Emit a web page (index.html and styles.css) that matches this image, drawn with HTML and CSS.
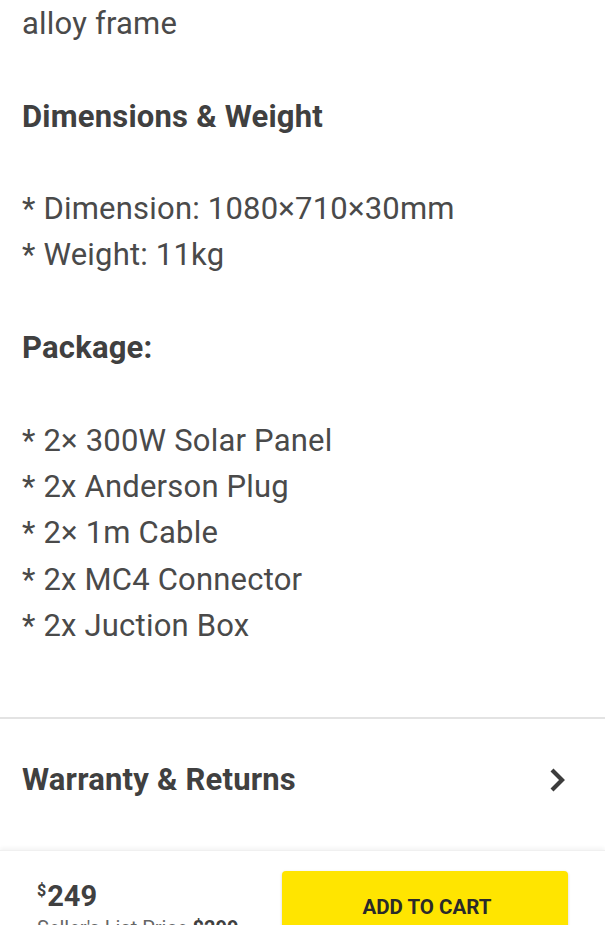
FILE: index.html
```html
<!DOCTYPE html>
<html lang="en">
<head>
    <meta charset="UTF-8">
    <meta name="viewport" content="width=device-width, initial-scale=1.0">
    <title>Solar Panel Kit</title>
    <link rel="stylesheet" href="styles.css">
</head>
<body>

    <div class="description">
        <p class="line">alloy frame</p>

        <h3 class="section-title">Dimensions &amp; Weight</h3>
        <p class="line">* Dimension: 1080×710×30mm</p>
        <p class="line">* Weight: 11kg</p>

        <h3 class="section-title">Package:</h3>
        <p class="line">* 2× 300W Solar Panel</p>
        <p class="line">* 2x Anderson Plug</p>
        <p class="line">* 2× 1m Cable</p>
        <p class="line">* 2x MC4 Connector</p>
        <p class="line">* 2x Juction Box</p>
    </div>

    <div class="row-link">
        <span>Warranty &amp; Returns</span>
        <svg class="chevron" width="20" height="26" viewBox="0 0 20 26">
            <path d="M4 3 L14 13 L4 23" fill="none" stroke="#3c3c3c" stroke-width="4.2" stroke-linejoin="miter"/>
        </svg>
    </div>

    <div class="buy-bar">
        <div class="price-box">
            <div class="price"><sup>$</sup>249</div>
            <div class="list-price">Seller's List Price <b>$299</b></div>
        </div>
        <button class="cart-button">ADD TO CART</button>
    </div>

</body>
</html>
```

FILE: styles.css
```css
/* Base */
body {
    margin: 0;
    padding: 0;
    font-family: Roboto, "Liberation Sans", Arial, sans-serif;
    color: #4a4a4a;
    background: #fff;
    height: 925px;
    overflow: hidden;
}
.description {
    padding: 1px 22px 0;
}
.line {
    margin: 0;
    font-size: 31px;
    letter-spacing: 0.2px;
    line-height: 46.3px;
}
.section-title {
    margin: 46.3px 0;
    font-size: 31px;
    letter-spacing: 0.2px;
    line-height: 46.3px;
    font-weight: bold;
    color: #404040;
}
/* Warranty row */
.row-link {
    margin-top: 68px;
    border-top: 2px solid #e3e3e3;
    height: 133px;
    box-sizing: border-box;
    display: flex;
    align-items: center;
    justify-content: space-between;
    padding: 0 37px 10px 22px;
    font-size: 31px;
    letter-spacing: 0.2px;
    font-weight: bold;
    color: #404040;
}
.chevron {
    display: block;
}
/* Bottom bar */
.buy-bar {
    display: flex;
    justify-content: space-between;
    align-items: flex-start;
    padding: 20px 37px 0 37px;
    box-shadow: 0 -2px 4px rgba(0, 0, 0, 0.05);
    border-top: 1px solid #f0f0f0;
    height: 80px;
}
.price-box {
    padding-top: 3px;
}
.price {
    font-size: 29px;
    font-weight: bold;
    color: #404040;
    line-height: 34px;
}
.price sup {
    font-size: 16px;
    vertical-align: 10px;
    margin-right: 1px;
}
.list-price {
    font-size: 20px;
    color: #666;
    line-height: 30px;
    white-space: nowrap;
}
.list-price b {
    font-weight: bold;
    color: #404040;
}
.cart-button {
    width: 286px;
    height: 72px;
    border: none;
    border-radius: 4px;
    background: #ffe500;
    box-shadow: 0 1px 3px rgba(0, 0, 0, 0.18);
    font-family: Roboto, "Liberation Sans", Arial, sans-serif;
    font-size: 20.5px;
    font-weight: bold;
    color: #2a2a2a;
    padding: 0 0 0 4px;
}
```
